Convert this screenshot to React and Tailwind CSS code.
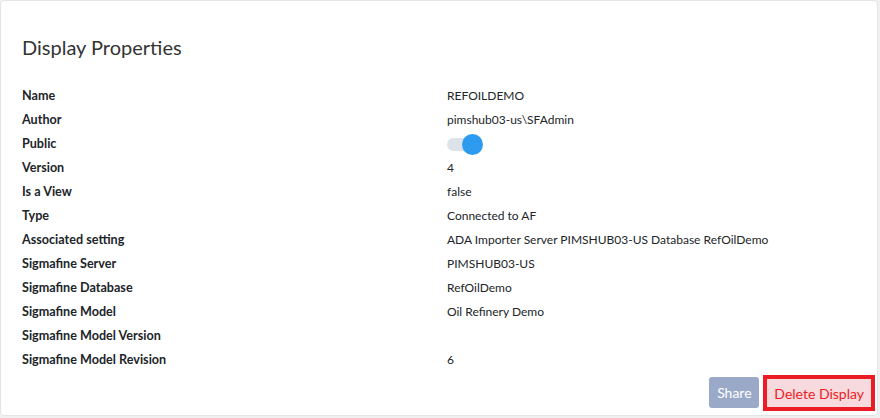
import React from "react";

const rows = [
  { label: "Name", value: "REFOILDEMO" },
  { label: "Author", value: "pimshub03-us\\SFAdmin" },
  { label: "Public", toggle: true },
  { label: "Version", value: "4" },
  { label: "Is a View", value: "false" },
  { label: "Type", value: "Connected to AF" },
  { label: "Associated setting", value: "ADA Importer Server PIMSHUB03-US Database RefOilDemo" },
  { label: "Sigmafine Server", value: "PIMSHUB03-US" },
  { label: "Sigmafine Database", value: "RefOilDemo" },
  { label: "Sigmafine Model", value: "Oil Refinery Demo" },
  { label: "Sigmafine Model Version", value: "" },
  { label: "Sigmafine Model Revision", value: "6" },
];

function Toggle() {
  return (
    <div className="relative h-[24px] w-[40px]">
      <div className="absolute left-0 top-[6px] h-[13px] w-[26px] rounded-full bg-[#dde3ea]" />
      <div className="absolute left-[15px] top-[2px] h-[21px] w-[21px] rounded-full bg-[#2d9cf0]" />
    </div>
  );
}

export default function App() {
  return (
    <div
      className="h-[418px] w-[880px] bg-[#f0f0f0] text-[#212529]"
      style={{ fontFamily: 'Lato, "Noto Sans", sans-serif' }}
    >
      <div className="flex h-[416px] w-[878px] flex-col rounded-[4px] border border-[#e4e4e4] bg-white px-[21px] pt-[32px]">
        <h2 className="text-[20px] leading-[28px] text-[#333]">Display Properties</h2>
        <div className="mt-[23px]">
          {rows.map((row, i) => (
            <div key={i} className="grid h-[24px] grid-cols-[425px_1fr] items-center">
              <div className="text-[12.6px] font-bold">{row.label}</div>
              <div className="text-[12px]">{row.toggle ? <Toggle /> : row.value}</div>
            </div>
          ))}
        </div>
        <div className="mt-[3px] mr-[-19px] flex justify-end gap-[4px]">
          <button className="mt-[2px] h-[31px] w-[50px] rounded-[3px] bg-[#9aa9c7] text-[14px] text-white">
            Share
          </button>
          <button className="h-[36px] border-4 border-[#ec1c24] bg-[#f7dadd] px-[7px] text-[14px] text-[#ec1c24]">
            Delete Display
          </button>
        </div>
      </div>
    </div>
  );
}
